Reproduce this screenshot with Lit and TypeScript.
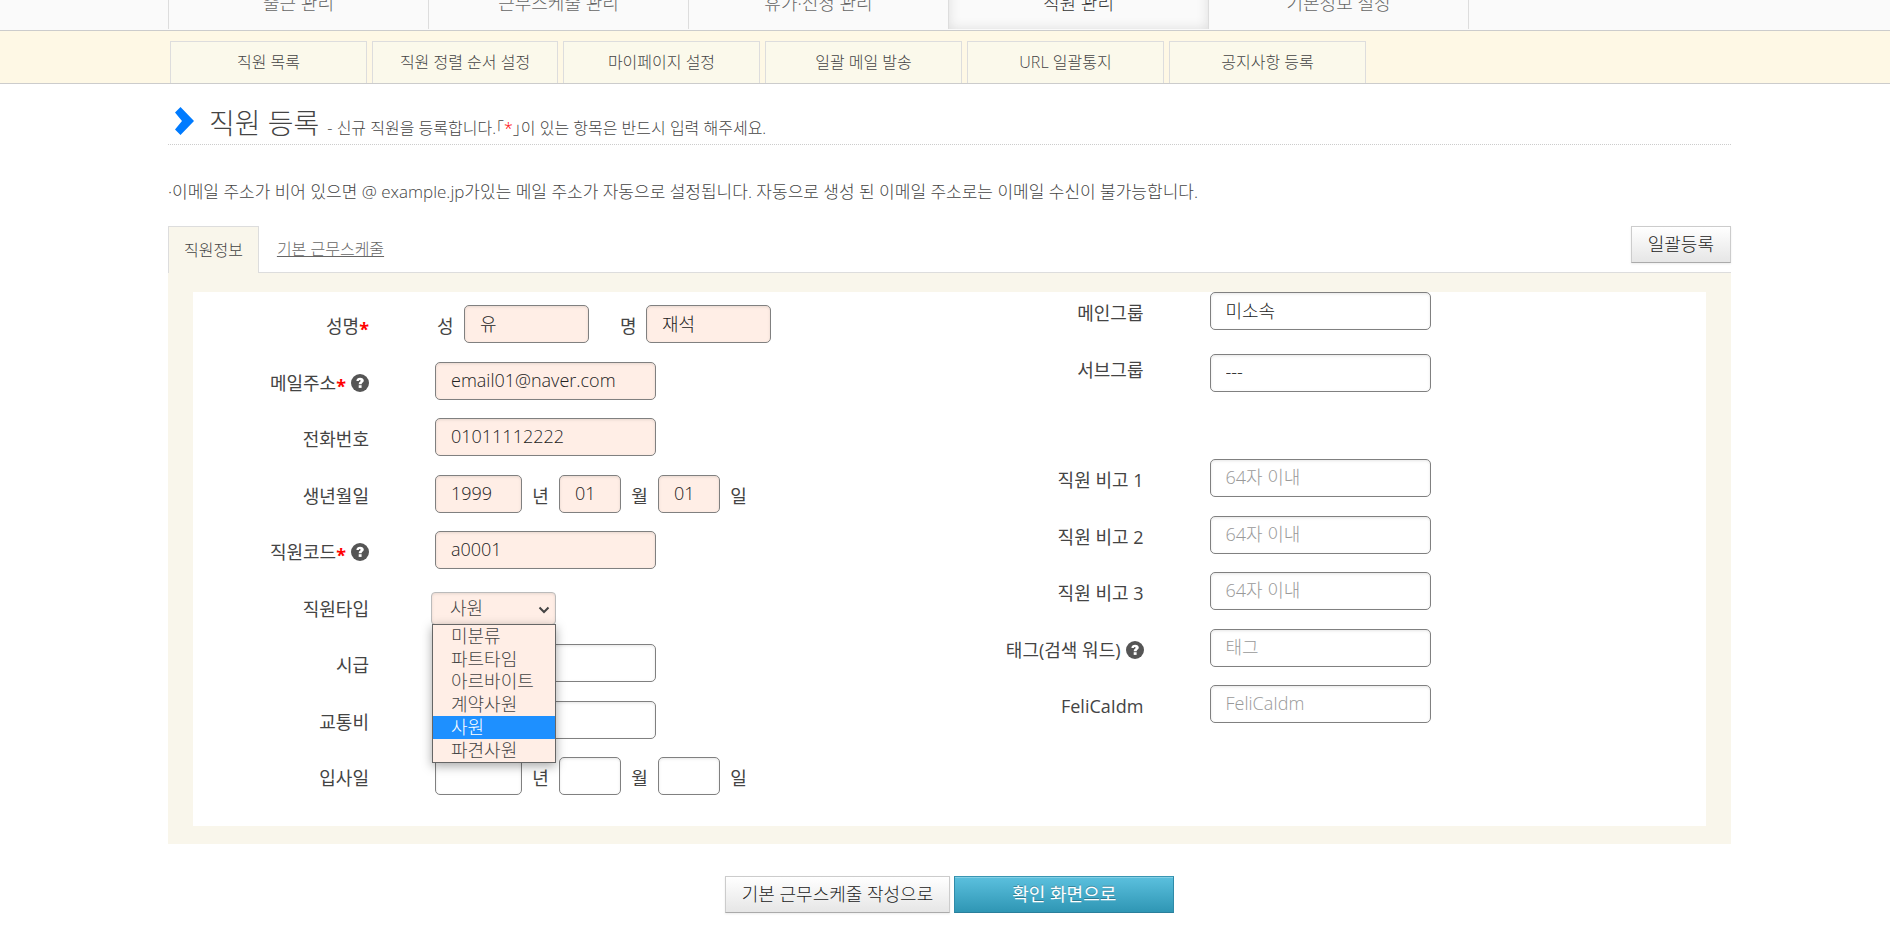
import { LitElement, html, css, svg, nothing } from "lit";
import { customElement, state } from "lit/decorators.js";

interface Field {
  id: string;
  label: string;
  value?: string;
  placeholder?: string;
  required?: boolean;
  help?: boolean;
  filled?: boolean;
}

const helpIcon = svg`<svg class="help" viewBox="0 0 18 18" role="img" aria-label="도움말">
  <circle cx="9" cy="9" r="9" fill="#555"></circle>
  <path d="M5.400 7C5.500 4.800 7 3.700 9.100 3.700c2.100 0 3.700 1.100 3.700 2.900 0 2.100-2.200 2.200-2.200 3.600H7.700c0-2.200 1.900-2.300 1.900-3.400 0-.5-.3-.8-.8-.8-.6 0-.9.3-1 1z" fill="#fff"></path>
  <rect x="7.700" y="11.200" width="2.900" height="2.700" fill="#fff"></rect>
</svg>`;

@customElement("app-root")
export class AppRoot extends LitElement {
  @state() private employeeType = "사원";

  private readonly mainMenu = ["출근 관리", "근무스케줄 관리", "휴가·신청 관리", "직원 관리", "기본정보 설정"];
  private readonly subMenu = ["직원 목록", "직원 정렬 순서 설정", "마이페이지 설정", "일괄 메일 발송", "URL 일괄통지", "공지사항 등록"];
  private readonly types = ["미분류", "파트타임", "아르바이트", "계약사원", "사원", "파견사원"];

  static styles = css`
    :host {
      display: flow-root;
      background: #fff;
      color: #444;
      font-family: "Open Sans", "Noto Sans CJK KR", sans-serif;
      font-weight: 300;
      font-size: 18px;
      line-height: 26px;
    }
    * { box-sizing: border-box; }
    a { color: inherit; text-decoration: none; }
    ul { list-style: none; margin: 0; padding: 0; }
    input, select, button { font: inherit; color: inherit; }
    .wrap { padding: 0 159px 0 168px; }

    .main-nav { margin-top: -41px; background: #fafafa; border-bottom: 1px solid #ccc; }
    .main-list { display: grid; grid-template-columns: repeat(5, minmax(0, 260px)) 1fr; height: 71px; padding-bottom: 1px; }
    .main-item { border-left: 1px solid #ddd; padding-top: 31px; text-align: center; line-height: 26px; color: #666; }
    .main-item.active { color: #333; box-shadow: inset 0 0 12px #ddd; }

    .sub-nav { background: #fef8e5; border-bottom: 1px solid #ccc; padding-top: 10px; }
    .sub-list { display: flex; gap: 5px; padding-left: 2px; }
    .sub-item {
      flex: 0 1 197px; height: 42px; border: 1px solid #ddd; border-bottom: 0;
      background: #fbf9eb; text-align: center; font-size: 16px; line-height: 40px;
    }
    .sub-item.tight { flex-basis: 186px; }

    .heading { display: flex; align-items: baseline; border-bottom: 1px dotted #ccc; height: 61px; padding: 16px 0 0 7px; }
    .chevron { width: 19px; height: 28px; align-self: flex-start; margin: 7px 15px 0 0; }
    .title { margin: 0 8px 0 0; font-size: 28px; line-height: 46px; font-weight: 300; }
    .desc { margin: 0; font-size: 16px; }
    .red { color: #f00; }
    .note { margin: 34px 0 21px; font-size: 17px; }

    .tabs { display: flex; align-items: flex-start; height: 46px; }
    .tab {
      height: 47px; padding: 0 15px; font-size: 16px; line-height: 46px;
      background: #f9f6eb; border: 1px solid #ddd; border-bottom: 0; position: relative;
    }
    .tab-link { padding: 0 18px; font-size: 16px; line-height: 46px; color: #666; text-decoration: underline; }
    .btn {
      height: 37px; padding: 0 16px; border: 1px solid #ccc; border-bottom-color: #aaa; color: #222;
      background: linear-gradient(#fff, #e6e6e6); box-shadow: 0 1px 2px rgba(0, 0, 0, 0.08); line-height: 33px;
    }
    .push { margin-left: auto; }
    .panel { background: #f9f6eb; border-top: 1px solid #ddd; padding: 19px 25px 18px; }
    .form { background: #fff; display: grid; grid-template-columns: 1fr 1fr; }

    .left { height: 534px; padding: 13px 0 12px; display: grid; grid-template-rows: repeat(9, 1fr); }
    .right { display: grid; grid-template-rows: 57px 110px repeat(5, 1fr); height: 450px; }
    .row { display: grid; grid-template-columns: 176px 1fr; column-gap: 66px; align-items: start; }
    .right .row { grid-template-columns: 194px 1fr; }
    .label { display: flex; justify-content: flex-end; align-items: center; padding-top: 8px; font-weight: 400; white-space: nowrap; }
    .label .red { font-weight: 700; line-height: 20px; padding-top: 6px; }
    .help { flex: none; width: 18px; height: 18px; margin-left: 5px; }
    .cell { display: flex; align-items: flex-start; }
    .cell.low { padding-top: 5px; }
    .box {
      width: 221px; height: 38px; padding: 0 15px 2px; border: 1px solid #808080; border-radius: 5px;
      background: #fff; color: #222; box-shadow: inset 0 1px 3px rgba(0, 0, 0, 0.1);
    }
    .box::placeholder { color: #999; opacity: 1; }
    .box.filled { background: #ffeee6; }
    .box.name { width: 125px; }
    .box.year { width: 87px; }
    .box.short { width: 62px; }
    .unit { padding-top: 8px; font-weight: 400; }
    .unit.before { padding-left: 2px; width: 29px; }
    .unit.second { margin-left: 31px; width: 26px; padding-left: 0; }
    .unit.after { width: 37px; text-align: center; }

    .picker { position: relative; margin: 4px 0 0 -4px; }
    .select {
      display: block; appearance: none; width: 125px; height: 33px; padding: 0 18px; border: 1px solid #bbb;
      border-radius: 4px; background: #ffeee6; box-shadow: inset 0 1px 3px rgba(0, 0, 0, 0.1);
    }
    .arrow { position: absolute; right: 6px; top: 14px; width: 12px; height: 8px; pointer-events: none; }
    .menu {
      position: absolute; left: 1px; right: 0; top: 32px; height: 139px; z-index: 1;
      display: grid; grid-template-rows: repeat(6, 1fr);
      border: 1px solid #666; background: #ffeee6; box-shadow: 0 3px 10px rgba(0, 0, 0, 0.35);
    }
    .option { padding: 0 18px; line-height: 22px; cursor: default; white-space: nowrap; }
    .option.on { background: #1e90ff; color: #fff; }

    .actions { display: flex; justify-content: center; gap: 4px; padding: 32px 0 14px; }
    .primary {
      width: 220px; color: #fff; font-weight: 400; border-color: #3a96b3 #2f8ba9 #2a7f9b; background: linear-gradient(#5bc0de, #2f96b4);
      box-shadow: inset 0 1px 0 rgba(255, 255, 255, 0.25); text-shadow: 0 -1px 0 rgba(0, 0, 0, 0.25);
    }
  `;

  private label(f: Field) {
    return html`<label class="label" for=${f.id}>${f.label}${f.required ? html`<span class="red">*</span>` : nothing}${f.help ? helpIcon : nothing}</label>`;
  }

  private text(f: Field, low = false) {
    return html`<div class="row">
      ${this.label(f)}
      <div class="cell ${low ? "low" : ""}">
        <input class="box ${f.filled ? "filled" : ""}" id=${f.id} type="text" .value=${f.value ?? ""} placeholder=${f.placeholder ?? ""} />
      </div>
    </div>`;
  }

  private date(id: string, label: string, parts: string[]) {
    const filled = parts[0] ? "filled" : "";
    return html`<div class="row">
      ${this.label({ id: `${id}-year`, label })}
      <div class="cell">
        <input class="box year ${filled}" id="${id}-year" type="text" .value=${parts[0]} />
        <label class="unit after" for="${id}-year">년</label>
        <input class="box short ${filled}" id="${id}-month" type="text" .value=${parts[1]} />
        <label class="unit after" for="${id}-month">월</label>
        <input class="box short ${filled}" id="${id}-day" type="text" .value=${parts[2]} />
        <label class="unit after" for="${id}-day">일</label>
      </div>
    </div>`;
  }

  private typePicker() {
    return html`<div class="row">
      ${this.label({ id: "type", label: "직원타입" })}
      <div class="cell">
        <div class="picker">
          <select class="select" id="type" @change=${(e: Event) => (this.employeeType = (e.target as HTMLSelectElement).value)}>
            ${this.types.map((t) => html`<option ?selected=${t === this.employeeType}>${t}</option>`)}
          </select>
          <svg class="arrow" viewBox="0 0 12 8" aria-hidden="true"><path d="M1.500 1.500 6 6l4.500-4.500" fill="none" stroke="#444" stroke-width="2"></path></svg>
          <ul class="menu" role="listbox" aria-label="직원타입">
            ${this.types.map((t) => html`<li class="option ${t === this.employeeType ? "on" : ""}" role="option" aria-selected=${t === this.employeeType} @click=${() => (this.employeeType = t)}>${t}</li>`)}
          </ul>
        </div>
      </div>
    </div>`;
  }

  render() {
    return html`
      <nav class="main-nav wrap">
        <div class="main-list">
          ${this.mainMenu.map((m) => html`<a class="main-item ${m === "직원 관리" ? "active" : ""}" href="#">${m}</a>`)}
          <span class="main-item"></span>
        </div>
      </nav>
      <nav class="sub-nav wrap">
        <div class="sub-list">
          ${this.subMenu.map((m, i) => html`<a class="sub-item ${i === 1 ? "tight" : ""}" href="#">${m}</a>`)}
        </div>
      </nav>
      <main class="wrap">
        <header class="heading">
          <svg class="chevron" viewBox="0 0 19 28" aria-hidden="true"><path d="M5.500 0 19 14 5.500 28 0 22.500 7 14 0 5.500z" fill="#007bff"></path></svg>
          <h1 class="title">직원 등록</h1>
          <p class="desc">- 신규 직원을 등록합니다.｢<span class="red">*</span>｣이 있는 항목은 반드시 입력 해주세요.</p>
        </header>
        <p class="note">·이메일 주소가 비어 있으면 @ example.jp가있는 메일 주소가 자동으로 설정됩니다. 자동으로 생성 된 이메일 주소로는 이메일 수신이 불가능합니다.</p>
        <div class="tabs">
          <a class="tab" href="#">직원정보</a>
          <a class="tab-link" href="#">기본 근무스케줄</a>
          <button class="btn push" type="button">일괄등록</button>
        </div>
        <section class="panel">
          <form class="form" id="employee" @submit=${(e: Event) => e.preventDefault()}>
            <div class="left">
              <div class="row">
                ${this.label({ id: "last", label: "성명", required: true })}
                <div class="cell">
                  <label class="unit before" for="last">성</label>
                  <input class="box name filled" id="last" type="text" .value=${"유"} />
                  <label class="unit second" for="first">명</label>
                  <input class="box name filled" id="first" type="text" .value=${"재석"} />
                </div>
              </div>
              ${this.text({ id: "mail", label: "메일주소", value: "email01@naver.com", required: true, help: true, filled: true })}
              ${this.text({ id: "phone", label: "전화번호", value: "01011112222", filled: true })}
              ${this.date("birth", "생년월일", ["1999", "01", "01"])}
              ${this.text({ id: "code", label: "직원코드", value: "a0001", required: true, help: true, filled: true })}
              ${this.typePicker()}
              ${this.text({ id: "wage", label: "시급" })}
              ${this.text({ id: "fare", label: "교통비" })}
              ${this.date("join", "입사일", ["", "", ""])}
            </div>
            <div class="right">
              ${this.text({ id: "main-group", label: "메인그룹", value: "미소속" })}
              ${this.text({ id: "sub-group", label: "서브그룹", value: "---" }, true)}
              ${[1, 2, 3].map((n) => this.text({ id: `memo-${n}`, label: `직원 비고 ${n}`, placeholder: "64자 이내" }))}
              ${this.text({ id: "tag", label: "태그(검색 워드)", placeholder: "태그", help: true })}
              ${this.text({ id: "felica", label: "FeliCaIdm", placeholder: "FeliCaIdm" })}
            </div>
          </form>
        </section>
        <div class="actions">
          <button class="btn" type="button">기본 근무스케줄 작성으로</button>
          <button class="btn primary" type="submit" form="employee">확인 화면으로</button>
        </div>
      </main>
    `;
  }
}
